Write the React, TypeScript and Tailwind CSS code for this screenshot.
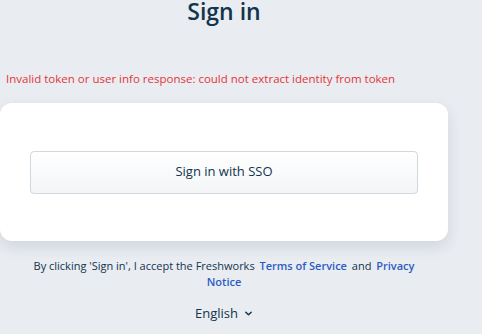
import React from "react";

export default function App() {
  return (
    <div
      className="w-[482px] h-[334px] bg-[#e9ecf1] overflow-hidden"
      style={{ fontFamily: "'Open Sans', 'Noto Sans', sans-serif" }}
    >
      <div className="w-[448px] flex flex-col">
        <h1 className="text-center text-[23px] leading-[22px] font-semibold text-[#12344d] mt-[-4px] pt-[4px]">
          Sign in
        </h1>
        <p className="mt-[49px] pl-[6px] text-[11.5px] leading-[15px] text-[#e43538] whitespace-nowrap">
          Invalid token or user info response: could not extract identity from token
        </p>
        <div className="mt-[17px] h-[138px] bg-white rounded-[12px] shadow-[0_6px_14px_rgba(40,60,90,0.12)] flex items-center px-[30px]">
          <button className="w-full h-[43px] rounded-[4px] border border-[#cfd7df] bg-gradient-to-b from-white to-[#f3f5f7] text-[13px] text-[#12344d]">
            Sign in with SSO
          </button>
        </div>
        <p className="mt-[17px] text-center text-[11px] leading-[16px] text-[#12344d] px-[26px]">
          By clicking 'Sign in', I accept the Freshworks{" "}
          <a className="text-[#2c5cc5] font-semibold ml-[2px] mr-[2px]">Terms of Service</a>{" "}and{" "}
          <a className="text-[#2c5cc5] font-semibold ml-[2px]">Privacy Notice</a>
        </p>
        <div className="mt-[14px] flex items-center justify-center gap-[6px] text-[13px] leading-[18px] text-[#12344d]">
          <span>English</span>
          <svg width="9" height="9" viewBox="0 0 10 10" fill="none" stroke="#12344d" strokeWidth="1.6" strokeLinecap="round" strokeLinejoin="round">
            <path d="M2 3.5 L5 6.5 L8 3.5" />
          </svg>
        </div>
      </div>
    </div>
  );
}
